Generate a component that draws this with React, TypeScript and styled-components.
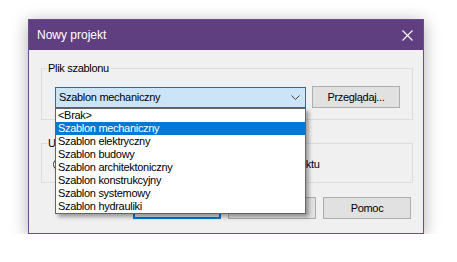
import styled, { createGlobalStyle } from "styled-components";

const GlobalStyle = createGlobalStyle`
  html, body {
    margin: 0;
    padding: 0;
    background: #ffffff;
  }
  body {
    font-family: "Liberation Sans", Arial, sans-serif;
  }
`;

const templates = [
  "<Brak>",
  "Szablon mechaniczny",
  "Szablon elektryczny",
  "Szablon budowy",
  "Szablon architektoniczny",
  "Szablon konstrukcyjny",
  "Szablon systemowy",
  "Szablon hydrauliki",
];

export default function App() {
  const selected = 1;
  return (
    <Page>
      <GlobalStyle />
      <Window>
        <TitleBar>
          <Title>Nowy projekt</Title>
          <CloseBtn>
            <svg width="11" height="11" viewBox="0 0 11 11">
              <path d="M0.5 0.5 L10.5 10.5 M10.5 0.5 L0.5 10.5" stroke="#ffffff" strokeWidth="1.1" />
            </svg>
          </CloseBtn>
        </TitleBar>
        <Client>
          <GroupBox $pad="17px 11px 11px 13px">
            <GroupLabel>Plik szablonu</GroupLabel>
            <TemplateRow>
              <ComboWrap>
                <Combo>
                  <ComboText>{templates[selected]}</ComboText>
                  <svg width="9" height="5" viewBox="0 0 9 5">
                    <path d="M0.5 0.5 L4.5 4.5 L8.5 0.5" stroke="#404040" strokeWidth="1" fill="none" />
                  </svg>
                </Combo>
                <DropList>
                  {templates.map((t, i) => (
                    <ListItem key={t} $active={i === selected}>
                      {t}
                    </ListItem>
                  ))}
                </DropList>
              </ComboWrap>
              <Button>Przeglądaj...</Button>
            </TemplateRow>
          </GroupBox>
          <GroupBox $gap={23} $pad="14px 11px 11px 11px">
            <GroupLabel>Utwórz na podstawie</GroupLabel>
            <RadioRow>
              <RadioOption>
                <Radio />
                Szablonu
              </RadioOption>
              <RadioOption>
                <Radio />
                Istniejącego projektu
              </RadioOption>
            </RadioRow>
          </GroupBox>
          <ButtonRow>
            <Button $default>OK</Button>
            <Button>Anuluj</Button>
            <Button>Pomoc</Button>
          </ButtonRow>
        </Client>
      </Window>
    </Page>
  );
}

const Page = styled.div`
  padding: 19px 0 0 28px;
`;

const Window = styled.div`
  width: 394px;
  border: 1px solid #6b4d8c;
  background: #f0f0f0;
  box-shadow: 0 3px 16px rgba(0, 0, 0, 0.32);
  display: flex;
  flex-direction: column;
`;

const TitleBar = styled.div`
  height: 30px;
  background: #603f81;
  display: flex;
  align-items: center;
  justify-content: space-between;
  padding: 0 10px 0 8px;
`;

const Title = styled.span`
  color: #ffffff;
  font-size: 12px;
  line-height: 14px;
`;

const CloseBtn = styled.div`
  width: 11px;
  height: 11px;
  display: flex;
`;

const Client = styled.div`
  padding: 18px 10px 14px 12px;
  display: flex;
  flex-direction: column;
  font-size: 11px;
  letter-spacing: -0.3px;
  color: #000000;
`;

const GroupBox = styled.div<{ $gap?: number; $pad: string }>`
  position: relative;
  border: 1px solid #dcdcdc;
  margin-top: ${(p) => p.$gap ?? 0}px;
  padding: ${(p) => p.$pad};
`;

const GroupLabel = styled.span`
  position: absolute;
  top: -8px;
  left: 5px;
  padding: 0 1px;
  background: #f0f0f0;
  line-height: 14px;
`;

const TemplateRow = styled.div`
  display: flex;
  align-items: center;
  gap: 6px;
`;

const ComboWrap = styled.div`
  position: relative;
  width: 251px;
`;

const Combo = styled.div`
  height: 21px;
  box-sizing: border-box;
  border: 1px solid #0078d7;
  background: #cce4f7;
  display: flex;
  align-items: center;
  justify-content: space-between;
  padding: 0 5px 0 3px;
`;

const ComboText = styled.span`
  line-height: 14px;
`;

const DropList = styled.div`
  position: absolute;
  top: 100%;
  left: 0;
  width: 251px;
  box-sizing: border-box;
  border: 1px solid #646464;
  background: #ffffff;
  box-shadow: 3px 3px 4px rgba(0, 0, 0, 0.35);
  z-index: 2;
`;

const ListItem = styled.div<{ $active?: boolean }>`
  height: 13px;
  line-height: 13px;
  padding-left: 2px;
  background: ${(p) => (p.$active ? "#0078d7" : "transparent")};
  color: ${(p) => (p.$active ? "#ffffff" : "#000000")};
  white-space: nowrap;
`;

const Button = styled.div<{ $default?: boolean }>`
  width: 88px;
  height: 22px;
  box-sizing: border-box;
  border: 1px solid ${(p) => (p.$default ? "#0078d7" : "#adadad")};
  box-shadow: ${(p) => (p.$default ? "inset 0 0 0 1px #0078d7" : "none")};
  background: #e1e1e1;
  display: flex;
  align-items: center;
  justify-content: center;
  line-height: 14px;
`;

const RadioRow = styled.div`
  display: grid;
  grid-template-columns: 154px auto;
  height: 13px;
  align-items: center;
`;

const RadioOption = styled.label`
  display: flex;
  align-items: center;
  gap: 5px;
  line-height: 13px;
`;

const Radio = styled.span`
  width: 11px;
  height: 11px;
  border: 1px solid #333333;
  border-radius: 50%;
  background: #ffffff;
`;

const ButtonRow = styled.div`
  display: flex;
  justify-content: flex-end;
  gap: 7px;
  margin-top: 14px;
  padding-right: 2px;
`;
